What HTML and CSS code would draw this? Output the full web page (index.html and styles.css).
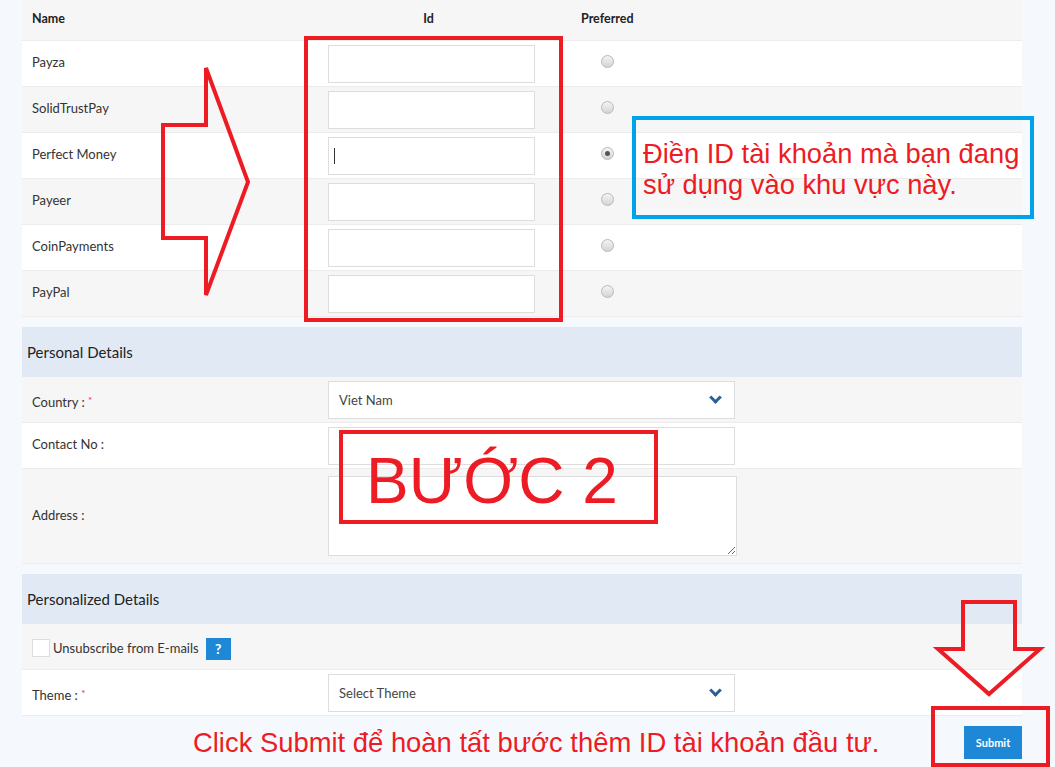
FILE: index.html
```html
<!DOCTYPE html>
<html lang="en">
<head>
<meta charset="UTF-8">
<title>Payment Accounts</title>
<link rel="stylesheet" href="styles.css">
</head>
<body>
<div class="page">
    <div class="accounts">
        <div class="row head">
            <div class="name">Name</div>
            <div class="id">Id</div>
            <div class="pref">Preferred</div>
        </div>
        <div class="row">
            <div class="name">Payza</div>
            <div class="id"><input type="text" class="box"></div>
            <div class="pref"><span class="radio"></span></div>
        </div>
        <div class="row alt">
            <div class="name">SolidTrustPay</div>
            <div class="id"><input type="text" class="box"></div>
            <div class="pref"><span class="radio"></span></div>
        </div>
        <div class="row">
            <div class="name">Perfect Money</div>
            <div class="id"><div class="box caret-box"><span class="caret"></span></div></div>
            <div class="pref"><span class="radio checked"></span></div>
        </div>
        <div class="row alt">
            <div class="name">Payeer</div>
            <div class="id"><input type="text" class="box"></div>
            <div class="pref"><span class="radio"></span></div>
        </div>
        <div class="row">
            <div class="name">CoinPayments</div>
            <div class="id"><input type="text" class="box"></div>
            <div class="pref"><span class="radio"></span></div>
        </div>
        <div class="row alt">
            <div class="name">PayPal</div>
            <div class="id"><input type="text" class="box"></div>
            <div class="pref"><span class="radio"></span></div>
        </div>
    </div>

    <div class="section-title">Personal Details</div>
    <div class="row alt">
        <div class="name low">Country : <span class="req">*</span></div>
        <div class="select"><span>Viet Nam</span><span class="chev"></span></div>
    </div>
    <div class="row">
        <div class="name">Contact No :</div>
        <input type="text" class="box wide">
    </div>
    <div class="row alt tall">
        <div class="name">Address :</div>
        <textarea class="area"></textarea>
    </div>

    <div class="section-title">Personalized Details</div>
    <div class="row alt">
        <label class="check"><span class="checkbox"></span>Unsubscribe from E-mails</label>
        <span class="help">?</span>
    </div>
    <div class="row">
        <div class="name low">Theme : <span class="req">*</span></div>
        <div class="select"><span>Select Theme</span><span class="chev"></span></div>
    </div>
    <div class="actions">
        <button class="submit">Submit</button>
    </div>
</div>

<svg class="marks" width="1055" height="767" viewBox="0 0 1055 767">
    <rect x="306" y="38" width="255" height="282" />
    <polygon points="163,125 206,125 206,68 248,182 206,295 206,238 163,238" />
    <rect x="341" y="432" width="315" height="90" />
    <polygon points="963,602 1015,602 1015,649 1040,649 989,694 938,649 963,649" />
    <rect x="933" y="708" width="115" height="57" />
    <rect class="blue" x="634" y="118" width="398" height="99" />
</svg>
<div class="note note-id">Điền ID tài khoản mà bạn đang<br>sử dụng vào khu vực này.</div>
<div class="note note-step">BƯỚC 2</div>
<div class="note note-submit">Click Submit để hoàn tất bước thêm ID tài khoản đầu tư.</div>
</body>
</html>
```

FILE: styles.css
```css
body {
    margin: 0;
    background-color: #f5f9fd;
    font-family: Lato, "Open Sans", sans-serif;
    font-size: 13px;
    color: #333;
    position: relative;
    width: 1055px;
    height: 767px;
    overflow: hidden;
}

.page {
    width: 1000px;
    margin-left: 22px;
}

.row {
    display: flex;
    align-items: center;
    height: 45px;
    border-bottom: 1px solid #ececec;
    background-color: #fff;
    padding-left: 10px;
}

.row.alt {
    background-color: #f6f6f6;
}

.row.tall {
    height: 94px;
}

.row.head {
    height: 36px;
    padding-bottom: 4px;
    background-color: #f6f6f6;
    font-weight: bold;
    font-size: 12.5px;
    color: #222;
}

.name {
    width: 296px;
    padding-bottom: 3px;
}

.name.low {
    padding-bottom: 0;
    padding-top: 5px;
}

.id {
    width: 207px;
    text-align: center;
}

.pref {
    width: 148px;
    text-align: center;
}

.head .name {
    padding-bottom: 0;
}

.head .id {
    box-sizing: border-box;
    padding-right: 6px;
}

.head .pref {
    text-align: left;
    padding-left: 46px;
}

.box {
    box-sizing: border-box;
    display: block;
    width: 207px;
    height: 38px;
    border: 1px solid #ddd;
    background: #fff;
    margin: 0;
    padding: 0 10px;
}

.box.wide {
    width: 407px;
}

.caret-box {
    display: flex;
    align-items: center;
    padding-left: 5px;
}

.caret {
    width: 1px;
    height: 16px;
    background: #333;
}

.radio {
    display: inline-block;
    width: 11px;
    height: 11px;
    border-radius: 50%;
    border: 1px solid #b8b8b8;
    background: linear-gradient(#f4f4f4, #d4d4d4);
    vertical-align: middle;
    position: relative;
    left: -2px;
    top: -4px;
}

.radio.checked::after {
    content: "";
    position: absolute;
    left: 3px;
    top: 3px;
    width: 5px;
    height: 5px;
    border-radius: 50%;
    background: #555;
}

.section-title {
    height: 50px;
    line-height: 50px;
    margin-top: 10px;
    background-color: #e1eaf4;
    padding-left: 5px;
    font-size: 15px;
    color: #222;
}

.req {
    color: #e33;
    font-size: 10px;
    vertical-align: top;
}

.select {
    box-sizing: border-box;
    width: 407px;
    height: 38px;
    border: 1px solid #ddd;
    background: #fff;
    display: flex;
    align-items: center;
    justify-content: space-between;
    padding: 0 14px 0 10px;
    color: #444;
}

.chev {
    width: 6px;
    height: 6px;
    border-right: 3px solid #2c5f94;
    border-bottom: 3px solid #2c5f94;
    transform: rotate(45deg);
    margin-top: -4px;
}

.area {
    box-sizing: border-box;
    width: 409px;
    height: 80px;
    border: 1px solid #ddd;
    margin: 0;
    resize: vertical;
}

.check {
    display: flex;
    align-items: center;
    font-size: 13px;
    padding-top: 2px;
}

.checkbox {
    width: 16px;
    height: 16px;
    border: 1px solid #ddd;
    background: #fff;
    margin-right: 3px;
}

.help {
    display: inline-block;
    width: 25px;
    height: 22px;
    line-height: 22px;
    text-align: center;
    background-color: #1e88d6;
    color: #fff;
    font-weight: bold;
    font-size: 14px;
    margin-left: 7px;
    margin-top: 4px;
}

.actions {
    display: flex;
    justify-content: flex-end;
    padding-top: 10px;
}

.submit {
    width: 58px;
    height: 33px;
    border: none;
    background-color: #1e88d6;
    color: #fff;
    font-family: Lato, sans-serif;
    font-weight: bold;
    font-size: 11px;
    padding: 0;
}

.marks {
    position: absolute;
    left: 0;
    top: 0;
}

.marks rect,
.marks polygon {
    fill: none;
    stroke: #ed1c24;
    stroke-width: 4;
}

.marks rect.blue {
    stroke: #00a2e8;
}

.note {
    position: absolute;
    color: #ed1c24;
    font-family: "Liberation Sans", Arial, sans-serif;
}

.note-id {
    left: 643px;
    top: 138px;
    font-size: 27.3px;
    line-height: 31px;
}

.note-step {
    left: 366px;
    top: 444px;
    font-size: 64px;
}

.note-submit {
    left: 193px;
    top: 727px;
    font-size: 27.4px;
}
```
